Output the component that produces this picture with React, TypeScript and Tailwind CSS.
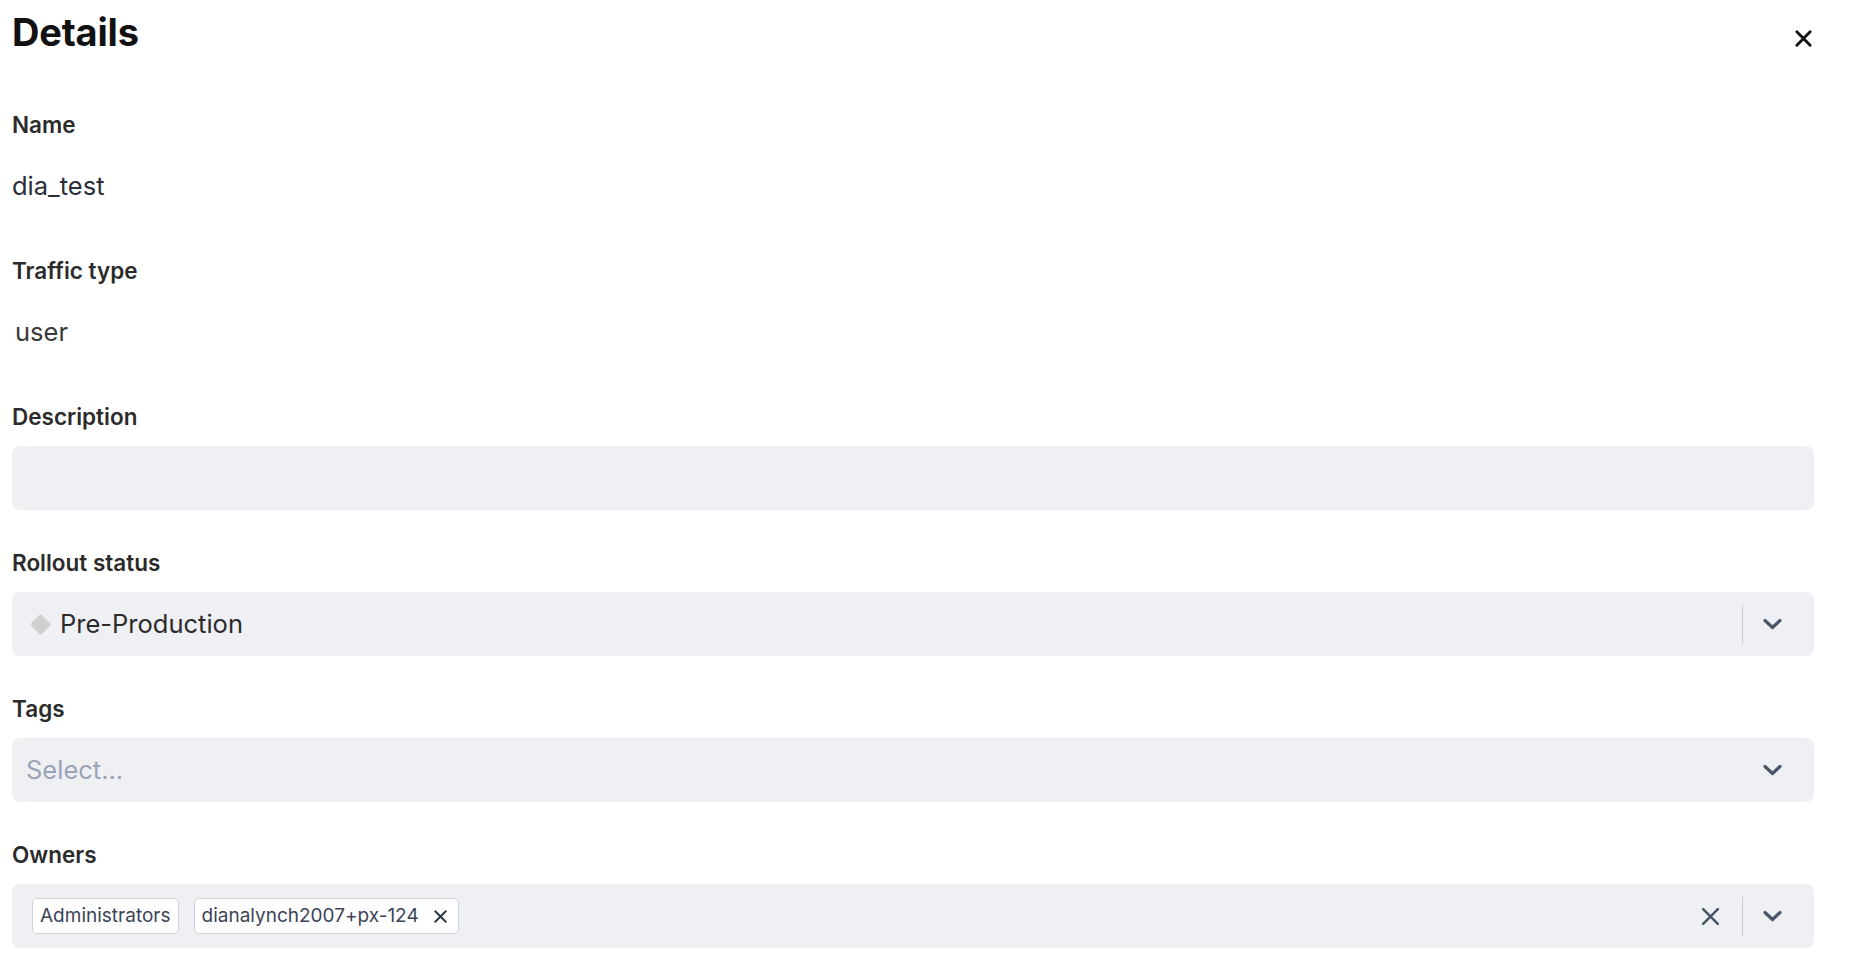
import type { ReactNode } from 'react';

const Chevron = () => (
  <svg width="19" height="12" viewBox="0 0 19 12" fill="none">
    <path d="M2 2.5 L9.5 9.5 L17 2.5" stroke="#4a5568" strokeWidth="3.2" strokeLinecap="round" strokeLinejoin="round" />
  </svg>
);

const Cross = ({ size, color, stroke }: { size: number; color: string; stroke: number }) => (
  <svg width={size} height={size} viewBox="0 0 20 20" fill="none">
    <path d="M3 3 L17 17 M17 3 L3 17" stroke={color} strokeWidth={stroke} strokeLinecap="round" />
  </svg>
);

// one labelled row: 28px label, 15px gap, 64px value box
const Field = ({ label, children }: { label: string; children: ReactNode }) => (
  <div className="mb-[39px]">
    <div className="h-[28px] leading-[28px] text-[22.5px] font-semibold text-[#2b2b2b]">{label}</div>
    <div className="mt-[15px] h-16">{children}</div>
  </div>
);

const Separator = () => <div className="h-[39px] w-px bg-[#c9cacd]" />;

export default function App() {
  return (
    <div
      className="min-h-screen bg-white pl-[12px] pr-[36px] text-[#2b2b2b]"
      style={{ fontFamily: 'Inter, "Noto Sans", sans-serif' }}
    >
      {/* Header */}
      <div className="flex items-start justify-between pt-[13px]">
        <h1 className="text-[38px] leading-[38px] font-bold text-[#111] tracking-[-0.2px]">Details</h1>
        <button className="mt-[16px] mr-[1px]">
          <Cross size={19} color="#111" stroke={3} />
        </button>
      </div>

      <div className="mt-[60px]">
        <Field label="Name">
          <div className="flex h-full items-center text-[25.5px] text-[#2a2e38]">dia_test</div>
        </Field>

        <Field label="Traffic type">
          <div className="flex h-full items-center pl-[3px] text-[25.5px] text-[#3a3a3a]">user</div>
        </Field>

        <Field label="Description">
          <div className="h-full w-full rounded-lg bg-[#eff0f4]" />
        </Field>

        <Field label="Rollout status">
          <div className="flex h-full items-center rounded-lg bg-[#eff0f4] pl-[21px] pr-[32px]">
            <span className="h-[15px] w-[15px] rotate-45 rounded-[2px] bg-[#cfcfcf]" />
            <span className="ml-[12px] text-[25.5px] text-[#2b2b2b]">Pre-Production</span>
            <div className="ml-auto flex items-center">
              <Separator />
              <div className="ml-[20px]">
                <Chevron />
              </div>
            </div>
          </div>
        </Field>

        <Field label="Tags">
          <div className="flex h-full items-center rounded-lg bg-[#eff0f4] pl-[14px] pr-[32px]">
            <span className="text-[25.5px] text-[#9aa4b6]">Select...</span>
            <div className="ml-auto">
              <Chevron />
            </div>
          </div>
        </Field>

        <Field label="Owners">
          <div className="flex h-full items-center rounded-lg bg-[#eff0f4] pl-[20px] pr-[32px]">
            <div className="flex items-center gap-[15px]">
              <span className="flex h-[36px] items-center rounded-[5px] border border-[#cfd4dc] bg-white px-[7px] text-[19px] text-[#3b4456]">
                Administrators
              </span>
              <span className="flex h-[36px] items-center rounded-[5px] border border-[#cfd4dc] bg-white pl-[7px] pr-[10px] text-[19px] text-[#3b4456]">
                dianalynch2007+px-124
                <span className="ml-[14px]">
                  <Cross size={15} color="#2d3748" stroke={2.6} />
                </span>
              </span>
            </div>
            <div className="ml-auto flex items-center">
              <Cross size={21} color="#4a5568" stroke={2.4} />
              <div className="ml-[21px]">
                <Separator />
              </div>
              <div className="ml-[20px]">
                <Chevron />
              </div>
            </div>
          </div>
        </Field>
      </div>
    </div>
  );
}
